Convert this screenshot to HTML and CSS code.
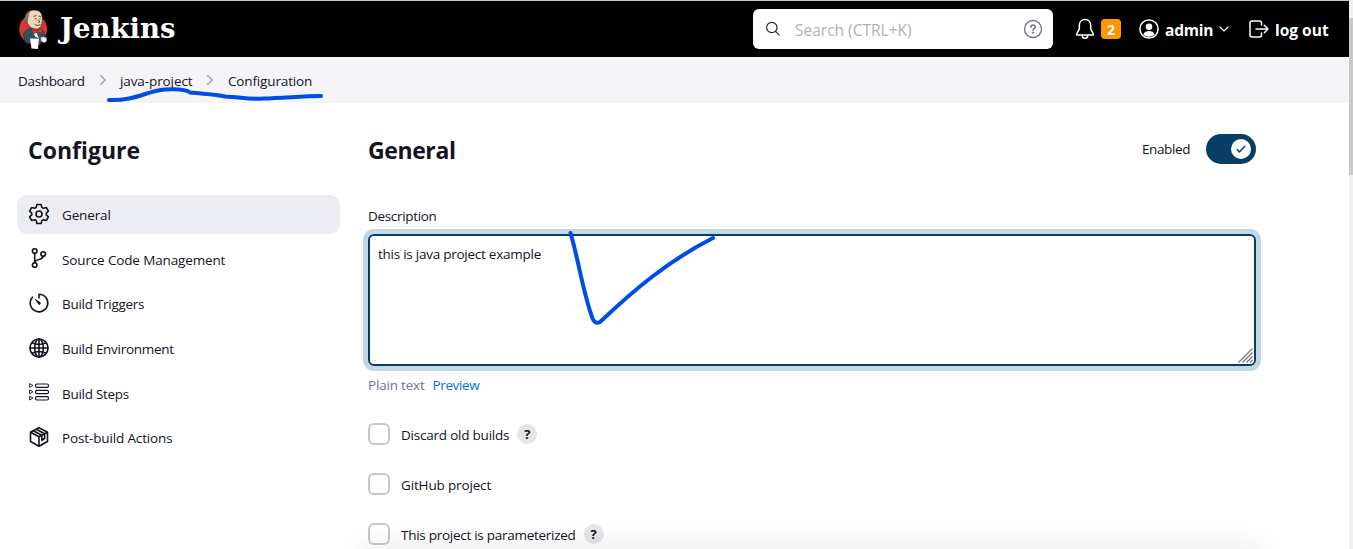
FILE: index.html
```html
<!DOCTYPE html>
<html lang="en">
<head>
<meta charset="utf-8">
<title>java-project Config [Jenkins]</title>
<link rel="stylesheet" href="styles.css">
</head>
<body>
<div class="app">
  <header class="header">
    <a class="brand">
      <svg class="mascot" width="30" height="41" viewBox="0 0 30 41">
        <ellipse cx="14.200" cy="20" rx="13.900" ry="14.500" fill="#d33833"/>
        <path d="M4.500 24l6-5 6 4 6-3 3 4 .5 6-3 1-2 5-12-1.500-3.500-2z" fill="#335061" stroke="#1b2a33" stroke-width=".6"/>
        <path d="M13.500 21.500l4 2 2.500 6-4-2z" fill="#f4f6f7"/>
        <path d="M7 7C8 2.500 12 .8 16 1.100c5 .3 7.500 3.500 7.300 8.400.2 5-.8 9.500-4.800 10.500-4 .6-8-1.500-10-5.500-1.500-2-2-5-1.500-7.500z" fill="#f0d6b7" stroke="#2b211b" stroke-width=".7"/>
        <path d="M5.800 11C5.400 6.500 7.500 3 11.500 1.700L9.800 5.500 9.300 9 8.800 13.500z" fill="#77726f"/>
        <path d="M14.500 7.500l3-1M19.500 7l2.300.6M15.800 9.800h2M20.600 9.800h1M19.300 10.500l1.500 2.500-1.500.6M16 15.500c2 1.400 4 1 5.500 0" stroke="#49372d" stroke-width=".9" fill="none"/>
        <path d="M13 20.500l4.500 1.700L22.500 19l.8 5-4.500-1-4.300 1.700z" fill="#e03a34" stroke="#8e2520" stroke-width=".6"/>
        <path d="M11 29.500l9 .3-1 10.200-6.500-.4z" fill="#fff"/>
        <path d="M21.500 28.500l2.500-.7 3.500.7.300 3.700-2.500 1.600-3-1.300z" fill="#f1ece7" stroke="#5a5a5a" stroke-width=".4"/>
      </svg>
      <span class="wordmark">Jenkins</span>
    </a>
    <div class="search">
      <svg width="16" height="16" viewBox="0 0 16 16" fill="none" stroke="#26262e" stroke-width="1.200"><circle cx="6.800" cy="6.500" r="5.200"/><path d="M10.500 10.300l4 4"/></svg>
      <span class="search-text">Search (CTRL+K)</span>
      <svg width="20" height="20" viewBox="0 0 20 20" fill="none" stroke="#73738c" stroke-width="1.400" stroke-linecap="round"><circle cx="10" cy="10" r="8.500"/><path d="M7.800 8.200c0-1.400 1-2.200 2.200-2.200s2.200.8 2.200 2c0 1.500-2.200 1.600-2.200 3.300" stroke-width="1.600"/><circle cx="10" cy="13.700" r=".4"/></svg>
    </div>
    <div class="alerts">
      <svg width="20" height="22" viewBox="0 0 20 22" fill="none" stroke="#fff" stroke-width="1.500" stroke-linejoin="round"><path d="M10 1.500c-3.500 0-5.700 2.600-5.700 6v3.400L1.700 15.800v1.200h16.600v-1.200l-2.600-4.900V7.500c0-3.400-2.200-6-5.700-6zM7.200 17.500a2.800 2.800 0 0 0 5.600 0"/></svg>
      <span class="badge">2</span>
    </div>
    <a class="account">
      <svg width="20" height="20" viewBox="0 0 20 20"><circle cx="10" cy="10" r="9.100" fill="none" stroke="#fff" stroke-width="1.500"/><circle cx="10" cy="7.700" r="3.300" fill="#fff"/><path d="M4.300 15.500c1-2.700 3.300-3.400 5.700-3.400s4.700.7 5.700 3.400c-3 3-8.400 3-11.400 0z" fill="#fff"/></svg>
      <span class="nav-text">admin</span>
      <svg class="chevron" width="10" height="6" viewBox="0 0 10 6" fill="none" stroke="#fff" stroke-width="1.200"><path d="M.7.800L5 5 9.300.8"/></svg>
    </a>
    <a class="logout">
      <svg width="20" height="18" viewBox="0 0 20 18" fill="none" stroke="#fff" stroke-width="1.500" stroke-linecap="round" stroke-linejoin="round"><path d="M12.500 5V3q0-2-2-2H3Q1 1 1 3v12q0 2 2 2h7.500q2 0 2-2v-2M7 9h12M15.300 5.200L19 9l-3.700 3.800"/></svg>
      <span class="nav-text">log out</span>
    </a>
  </header>

  <nav class="crumbs">
    <span class="crumb-home">Dashboard</span>
    <svg width="8" height="12" viewBox="0 0 8 12"><path d="M1.200 1.200L6.200 6l-5 4.800"/></svg>
    <span class="crumb-job">java-project</span>
    <svg width="8" height="12" viewBox="0 0 8 12"><path d="M1.200 1.200L6.200 6l-5 4.800"/></svg>
    <span class="crumb-page">Configuration</span>
  </nav>

  <div class="page">
    <aside class="side">
      <h1>Configure</h1>
      <div class="task active">
        <svg viewBox="0 0 22 22"><path d="M8.900 1.500h4.200l.7 2.900 1.600.9 2.900-.8 2.100 3.600-2.100 2v1.800l2.100 2-2.100 3.600-2.900-.8-1.600.9-.7 2.900H8.900l-.7-2.900-1.600-.9-2.900.8-2.100-3.600 2.100-2v-1.800l-2.100-2 2.100-3.600 2.900.8 1.600-.9z"/><circle cx="11" cy="11" r="3"/></svg>
        <span>General</span>
      </div>
      <div class="task">
        <svg viewBox="0 0 22 22"><circle cx="6.700" cy="4" r="2.300"/><circle cx="6.700" cy="18" r="2.300"/><circle cx="15.200" cy="7" r="2.300"/><path d="M6.700 6.300v9.400M15.200 9.300c0 4.200-8.500 2-8.500 6.400"/></svg>
        <span>Source Code Management</span>
      </div>
      <div class="task tight">
        <svg viewBox="0 0 22 22"><path d="M11 6V2.200a8.800 8.800 0 1 1-6.600 3"/><path d="M6.300 6.300l6 4a1.400 1.400 0 0 1-2 2z" fill="#14141f" stroke="none"/></svg>
        <span>Build Triggers</span>
      </div>
      <div class="task tight">
        <svg viewBox="0 0 22 22"><circle cx="11" cy="11" r="9"/><ellipse cx="11" cy="11" rx="4.300" ry="9"/><path d="M11 2v18M2 11h18M4 5.800c4.200 2 9.800 2 14 0M4 16.200c4.200-2 9.800-2 14 0"/></svg>
        <span>Build Environment</span>
      </div>
      <div class="task tight thin">
        <svg viewBox="0 0 22 22"><rect x="7.500" y="3" width="13" height="3.400" rx="1.500"/><rect x="7.500" y="9.300" width="13" height="3.400" rx="1.500"/><rect x="7.500" y="15.600" width="13" height="3.400" rx="1.500"/><path stroke-width=".9" d="M1.600 3v3.400l3-1.700zM1.600 9.300v3.400l3-1.700zM1.600 15.600v3.400l3-1.700z"/></svg>
        <span>Build Steps</span>
      </div>
      <div class="task">
        <svg viewBox="0 0 22 22"><path d="M11 1.700l8.500 4.500v9.300L11 20.300l-8.500-4.800V6.200zM2.500 6.200L11 10.800l8.500-4.600M11 10.800v9.500M5.300 4.700l8.500 4.600M8.300 3.200l8.300 4.500M13.800 9.300v4.900l2.800-1.700V7.700"/></svg>
        <span>Post-build Actions</span>
      </div>
    </aside>

    <main class="main">
      <div class="title-row">
        <h2>General</h2>
        <span class="enabled">Enabled</span>
        <span class="toggle"><span class="knob"><svg width="20" height="20" viewBox="0 0 20 20" fill="none" stroke="#063f63" stroke-width="1.500" stroke-linecap="round" stroke-linejoin="round"><path d="M6.200 10.600l2.300 2.400 5.200-5.700"/></svg></span></span>
      </div>
      <div class="label">Description</div>
      <div class="textarea">
        <span>this is java project example</span>
        <svg class="grip" width="15" height="15" viewBox="0 0 15 15" stroke="#77777c" stroke-width="1.200"><path d="M.5 14.500l14-14M4.500 14.500l10-10M8.500 14.500l6-6M12 14.500l2.500-2.500"/></svg>
      </div>
      <div class="format"><span class="plain">Plain text</span><a class="preview">Preview</a></div>
      <div class="option"><span class="box"></span><span class="o1">Discard old builds</span><span class="help">?</span></div>
      <div class="option"><span class="box"></span><span class="o2">GitHub project</span></div>
      <div class="option"><span class="box"></span><span class="o3">This project is parameterized</span><span class="help">?</span></div>
    </main>
  </div>
  <div class="bar-shadow"></div>
</div>
<div class="scroll"><div class="thumb"></div></div>

<!-- pen marks -->
<svg class="ink" width="1353" height="549" viewBox="0 0 1353 549">
  <path d="M109 100C136 101 146 91 165 89.500C182 88.500 187 90 190 92.500C203 94 215 94 225 96.500C240 97 249 99.500 263 98.500C285 98 302 96 321 96"/>
  <path d="M570.500 233C578 258 582 287 591 314Q594 325.500 600 322C635 289 668 261 713 238"/>
</svg>
</body>
</html>
```
FILE: styles.css
```css
* { box-sizing: border-box; }
body {
  margin: 0; height: 549px; overflow: hidden; display: flex; background: #fff;
  color: #14141f; font: 13.5px/20px "Open Sans", "Noto Sans", sans-serif;
}
svg { display: block; flex: none; }
span, a { white-space: nowrap; }
.app { position: relative; width: 1349px; height: 549px; overflow: hidden; flex: none; }

.header {
  height: 57px; background: #000; border-top: 1px solid #c4c8c6; color: #fff;
  display: flex; align-items: center; padding-left: 19px;
}
.brand { display: flex; align-items: center; width: 734px; gap: 11px; }
.wordmark { font: bold 27.5px/40px "DejaVu Serif", serif; margin-top: -3px; }
.search {
  width: 300px; height: 40px; border-radius: 6px; background: #fff;
  display: flex; align-items: center; padding: 0 10px 0 12px;
}
.search-text { flex: 1; margin: 2px 0 0 14px; font-size: 15.5px; color: #b0b0bd; }
.alerts { display: flex; align-items: center; gap: 6px; margin-left: 22px; }
.badge {
  width: 20px; height: 20px; border-radius: 4px; background: #ff9800;
  font-weight: 700; font-size: 14px; line-height: 21px; text-align: center;
}
.account { display: flex; align-items: center; margin-left: 18px; gap: 6px; width: 92px; }
.nav-text { font-size: 15.5px; font-weight: 700; margin-top: 2px; }
.account .nav-text { letter-spacing: -0.2px; }
.chevron { margin-top: -1px; }
.logout { display: flex; align-items: center; margin-left: 18px; gap: 6px; }

.crumbs { height: 46px; background: #f5f5f8; display: flex; align-items: center; padding: 2px 0 0 18px; }
.crumbs svg { fill: none; stroke: #a5a5b5; stroke-width: 1.5; margin-top: -3px; }
.crumb-home { width: 81px; letter-spacing: -0.33px; }
.crumb-job { width: 86px; margin-left: 13px; letter-spacing: -0.1px; }
.crumb-page { margin-left: 14px; letter-spacing: -0.15px; }

.page { display: flex; height: 446px; overflow: hidden; }
.side { width: 363px; padding: 31px 0 0 17px; }
h1, h2 { margin: 0; font-size: 23px; line-height: 32px; font-weight: 700; }
h1 { margin: 0 0 29px 11px; }
.task { width: 323px; height: 39px; margin-bottom: 5.7px; border-radius: 10px; padding-left: 11px; display: flex; align-items: center; gap: 12px; letter-spacing: -0.14px; }
.task svg { width: 22px; height: 22px; fill: none; stroke: #14141f; stroke-width: 1.6; stroke-linejoin: round; stroke-linecap: round; margin-top: -2px; }
.task.thin svg { stroke-width: 1.2; }
.task span { margin-top: 1px; }
.task.active { background: #ecedf3; }
.task.tight { letter-spacing: -0.28px; }
.active span { font-weight: 500; }

.main { width: 893px; padding: 31px 0 0 5px; }
.title-row { display: flex; align-items: center; height: 30px; }
h2 { flex: 1; padding-top: 2px; letter-spacing: -0.4px; }
.enabled { margin-right: 16px; letter-spacing: -0.4px; }
.toggle { width: 50px; height: 30px; border-radius: 15px; background: #063f63; padding: 5px; display: flex; justify-content: flex-end; }
.knob { width: 20px; height: 20px; border-radius: 50%; background: #fff; }
.label { margin-top: 42px; letter-spacing: -0.33px; }
.textarea {
  position: relative; width: 888px; height: 132px; margin-top: 8px; padding: 8px;
  border: 2px solid #063f63; border-radius: 6px; box-shadow: 0 0 0 5px #c1d9e7; letter-spacing: -0.25px;
}
.grip { position: absolute; right: 1px; bottom: 1px; }
.format { display: flex; gap: 8px; margin-top: 9px; }
.plain { color: #73738c; letter-spacing: -0.2px; }
.preview { color: #0073e6; letter-spacing: -0.37px; }
.format + .option { margin-top: 28px; }
.option { display: flex; align-items: center; height: 22px; margin-bottom: 28px; }
.box { width: 22px; height: 22px; border: 2px solid #c0cacf; border-radius: 6px; margin-right: 11px; background: #fff; }
.option > span:nth-child(2) { padding-top: 2px; }
.o1 { letter-spacing: -0.22px; }
.o2 { letter-spacing: -0.15px; }
.o3 { letter-spacing: -0.27px; }
.help { width: 20px; height: 20px; margin-left: 8px; border-radius: 50%; background: #e6e6e8; text-align: center; font-weight: 700; font-size: 13px; }

.bar-shadow { position: absolute; left: 363px; top: 549px; width: 897px; height: 60px; box-shadow: 0 0 30px rgba(0, 0, 0, .1); }
.scroll { width: 4px; flex: none; background: #f0f0f0; padding-top: 18px; }
.thumb { height: 157px; background: #c9c9c9; }
.ink { position: absolute; left: 0; top: 0; fill: none; stroke: #004ce6; stroke-width: 4; stroke-linecap: round; stroke-linejoin: round; }
```
